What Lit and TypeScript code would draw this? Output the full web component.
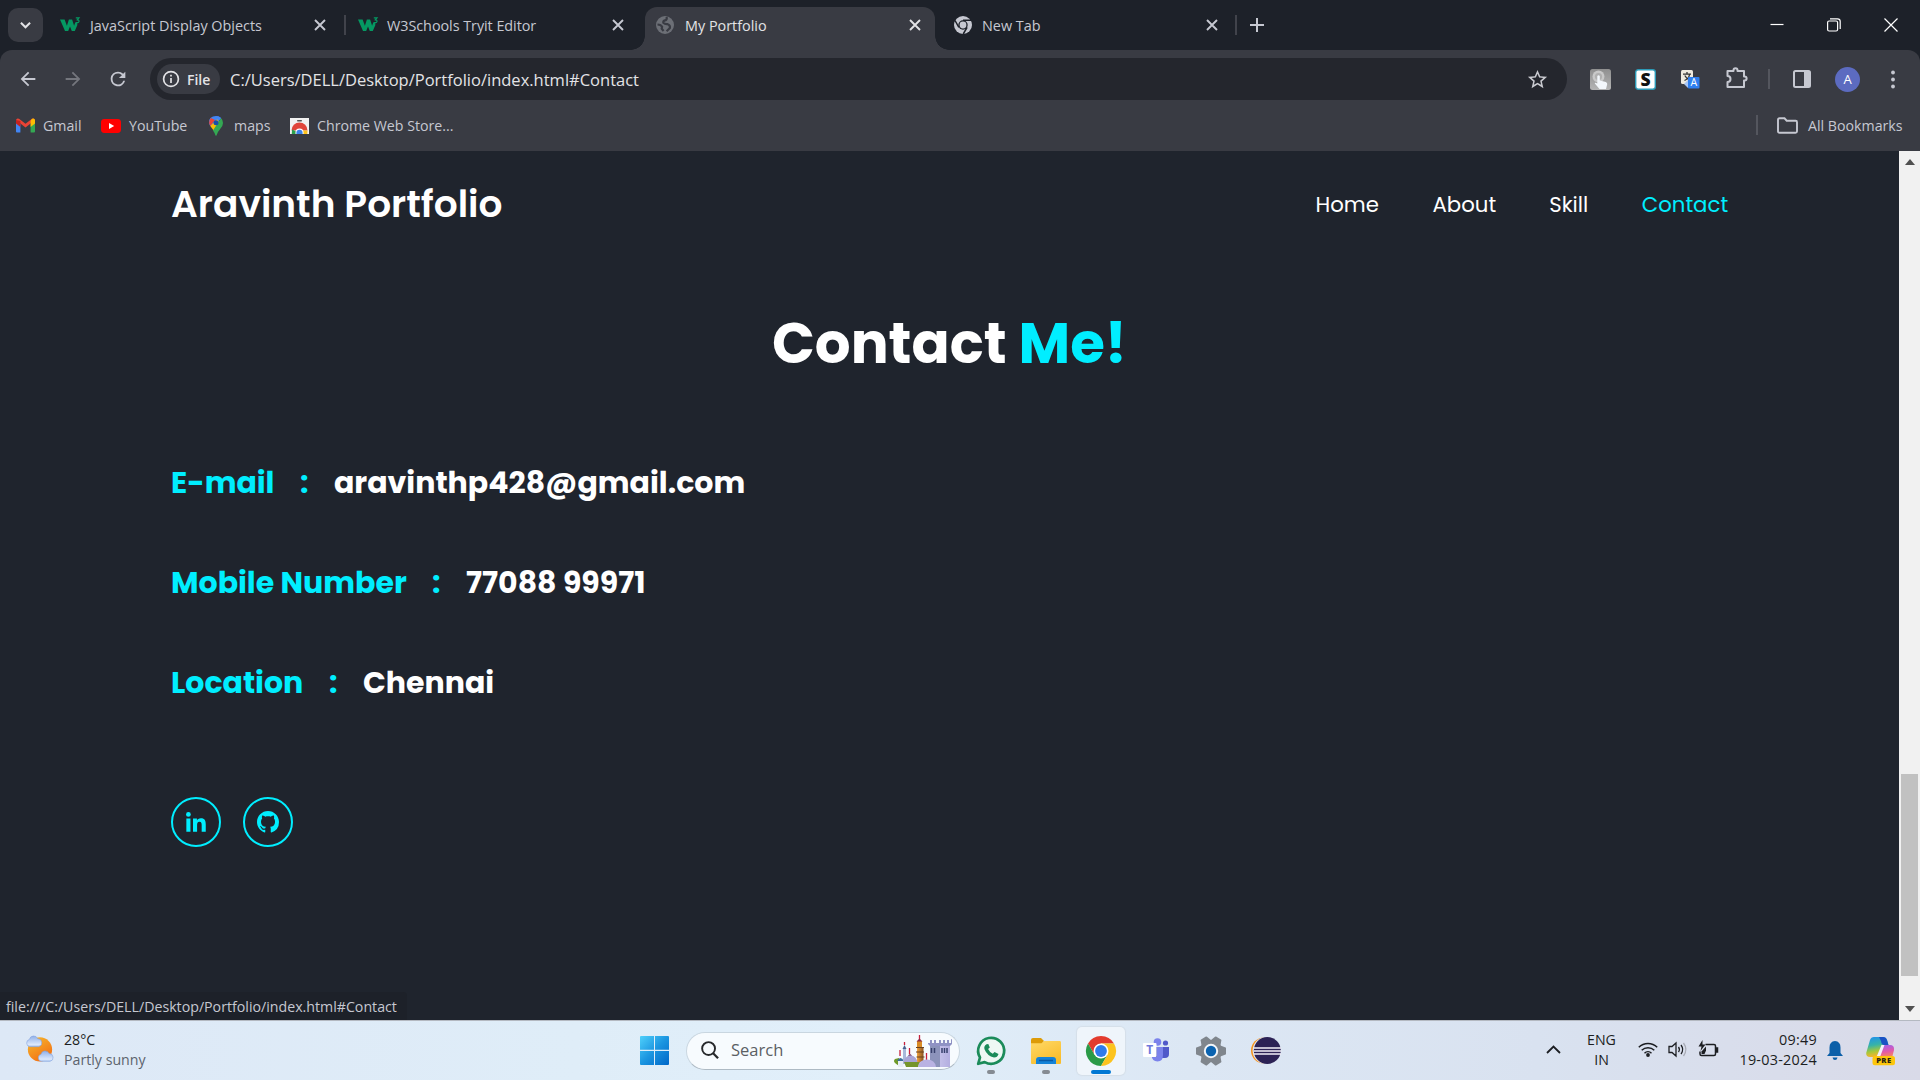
import { LitElement, html, svg, css } from "lit";
import { customElement } from "lit/decorators.js";

const icon = (cls: string, vb: string, body: unknown) =>
  html`<svg class=${cls} viewBox=${vb} aria-hidden="true">${body}</svg>`;

const cross = svg`<path d="M1 1 11 11M11 1 1 11" fill="none" stroke="currentColor" stroke-width="1.9"/>`;
const w3 = svg`<path d="M0 4.500h4.600l2.300 6.200 2-6.200h3.200l2 6.200 1.200-3.400 2 .4v2.600L14.800 16h-3L10 11.400 8.200 16H5z" fill="#059862"/>
  <path d="M15.800 2.800h3.200l-1.700 2q2 .2 1.700 1.800-.6 1.600-3 .9" fill="none" stroke="#059862" stroke-width="1.200"/>`;
const globe = svg`<circle cx="10" cy="10" r="9" fill="#6c6f76"/>
  <path d="M11.500 1.800q.8 2.400-.8 3.400-2.700.5-2.400 2.600 1.500 1.400 4 1.200 3.200 1.200 2.600 4l-3.300 3.300M2.500 9.500q3.600.2 4.600 2.300l-.4 2 1.900 2.200" fill="none" stroke="#393b43" stroke-width="2.200"/>`;
const chromeGrey = svg`<circle cx="10" cy="10" r="9" fill="#c6c8d1"/>
  <circle cx="10" cy="10" r="4.700" fill="#1d2129"/><circle cx="10" cy="10" r="3.400" fill="#c6c8d1"/>
  <path d="M10 5.300h8M5.900 12.300 2 5.500M14.100 12.300 10.200 19" stroke="#1d2129" stroke-width="1.500" fill="none"/>`;
const chromeColor = svg`<path d="M28 7.500A15 15 0 0 0 2 7.500L8.500 18.750 15 7.500z" fill="#e33b2e"/>
  <path d="M2 7.500A15 15 0 0 0 15 30L21.500 18.750H8.500z" fill="#2a9a47"/>
  <path d="M15 30A15 15 0 0 0 28 7.500H15L21.500 18.750z" fill="#fcc31e"/>
  <circle cx="15" cy="15" r="7.500" fill="#fff"/><circle cx="15" cy="15" r="5.900" fill="#2f7bea"/>`;
const gmail = svg`<path d="M0 2v11.500q0 1 1 1h3.400V6z" fill="#4285f4"/><path d="M19 2v11.500q0 1-1 1h-3.400V6z" fill="#34a853"/>
  <path d="M0 2Q.6-.4 3 .8l6.500 5L16 .8Q18.400-.4 19 2l-4.400 3.600-5.100 4-5.100-4z" fill="#ea4335"/>
  <path d="M0 2v3.500l4.400 3.400V3z" fill="#c5221f"/><path d="M14.600 2.800 16 .8Q18.400-.4 19 2v3.500l-4.400 3.400z" fill="#fbbc04"/>`;
const youtube = svg`<rect width="20" height="14" rx="3.400" fill="#f00"/><path d="M8 4v6l5.200-3z" fill="#fff"/>`;
const maps = svg`<path d="M7 0Q10 0 12 2L4.500 10.500 1.200 10Q0 8 0 6.500 0 0 7 0z" fill="#4285f4"/>
  <path d="M2 2Q0 4 .1 7l1.300 3L6 4z" fill="#ea4335"/><path d="M1.300 10 9 2.500l1.200 5-5.600 7z" fill="#fbbc04"/>
  <path d="M12 2q2 2 2 5 0 2.500-2.500 5.500Q8.500 16 7.600 19.200q-.6 1-1.200 0-.5-2-2.400-4.700z" fill="#34a853"/>
  <path d="M7 0q3 0 5 2L9.200 5.400z" fill="#4285f4"/><circle cx="7" cy="6.700" r="2.500" fill="#1a4fa8"/>`;
const store = svg`<path d="M0 0h19v16H0z" fill="#f1f1f1"/><rect x="7" y="2" width="5" height="1.500" rx=".7" fill="#555"/>
  <path d="M1.500 12.500a8 8 0 0 1 16 0H9.500z" fill="#e0443a"/>
  <path d="M2 11.500 1.800 16H7l-.6-2.500z" fill="#2aa04c"/><path d="M12.600 12.500H17.500L17.300 16H12z" fill="#fcc31e"/>
  <path d="M5.500 16v-1.500a4 4 0 0 1 8 0V16z" fill="#fff"/><path d="M6.400 16v-1.200a3.100 3.100 0 0 1 6.200 0V16z" fill="#3b82ee"/>`;
const back = svg`<path d="M20 11H7.830l5.590-5.590L12 4l-8 8 8 8 1.410-1.410L7.830 13H20z" fill="currentColor"/>`;
const forward = svg`<path d="M4 11h12.170l-5.590-5.590L12 4l8 8-8 8-1.410-1.410L16.170 13H4z" fill="currentColor"/>`;
const reload = svg`<path d="M17.650 6.350A7.960 7.960 0 0 0 12 4a8 8 0 1 0 7.730 10h-2.080A6 6 0 1 1 12 6c1.660 0 3.140.69 4.220 1.780L13 11h7V4z" fill="currentColor"/>`;
const info = svg`<circle cx="9" cy="9" r="7.400" fill="none" stroke="#e3e3e6" stroke-width="1.700"/>
  <path d="M9 8v5M9 4.800v1.700" stroke="#e3e3e6" stroke-width="1.700"/>`;
const star = svg`<path d="M12 17.270 18.180 21l-1.640-7.030L22 9.240l-7.190-.61L12 2 9.190 8.630 2 9.240l5.460 4.730L5.820 21zm0-2-3.760 2.270 1-4.280L5.920 10.400l4.380-.38L12 6l1.710 4.020 4.380.38-3.320 2.880 1 4.270z" fill="#c9cad0"/>`;
const touch = svg`<defs><linearGradient id="tg" x2="0" y2="1"><stop stop-color="#8f8f8f"/><stop offset="1" stop-color="#b5b5b5"/></linearGradient></defs>
  <rect width="21" height="21" rx="2.500" fill="url(#tg)"/><circle cx="8.500" cy="7.500" r="6" fill="#c9c9c9"/><circle cx="8.500" cy="7.500" r="3.600" fill="#b0b0b0"/>
  <path d="M7.300 7q1.300-1.400 2.500 0v4.500l6 1.400q1.700.6 1.400 2.400L16 20H9.500L4.800 14.600q-.2-1.500 2.500 0z" fill="#f3f7fb"/>`;
const sBox = svg`<rect x=".7" y=".7" width="19.600" height="19.600" rx="2.500" fill="#fff" stroke="#2c9ab7" stroke-width="1.400"/>
  <text x="10.500" y="16.800" text-anchor="middle" font-size="17.500" font-weight="800" fill="#111">S</text>`;
const translate = svg`<rect width="12" height="14" rx="1.500" fill="#efeadf"/><path d="M2 4.200h8M6 2v2M3.500 10.500Q8 8.500 8.500 4.500M3.800 5.500Q5.500 9 9 10.200" stroke="#333" stroke-width="1.300" fill="none"/>
  <path d="M3 14l4 4V10z" fill="#a9c6f5"/><rect x="7" y="7" width="11.500" height="11.500" rx="1" fill="#2f7ff0"/>
  <text x="12.700" y="16.400" text-anchor="middle" font-size="10.500" fill="#fff">A</text>`;
const puzzle = svg`<path d="M1.500 4h6V3.200a2 2 0 0 1 4 0V4H18v5.500h.6a2 2 0 0 1 0 4H18V20H1.500v-5a3 3 0 0 0 0-6z" fill="none" stroke="#c6c8d1" stroke-width="2" stroke-linejoin="round"/>`;
const panel = svg`<rect x="1" y="1" width="16" height="16" rx="1.500" fill="none" stroke="#c6c8d1" stroke-width="2"/><path d="M11 1h6v16h-6z" fill="#c6c8d1"/>`;
const dots = svg`<g fill="#c6c8d1"><circle cx="3" cy="2.500" r="1.900"/><circle cx="3" cy="9.500" r="1.900"/><circle cx="3" cy="16.500" r="1.900"/></g>`;
const folderLine = svg`<path d="M1 2.500Q1 1 2.500 1h5l2.200 2.500h9Q20 3.500 20 5v9q0 1.500-1.500 1.500h-16Q1 15.500 1 14z" fill="none" stroke="#c6c8d1" stroke-width="1.900"/>`;

const linkedin = svg`<circle cx="4.983" cy="5.009" r="2.188"/><path d="M9.237 8.855v12.139h3.769v-6.003c0-1.584.298-3.118 2.262-3.118 1.937 0 1.961 1.811 1.961 3.218v5.904H21v-6.657c0-3.270-.704-5.783-4.526-5.783-1.835 0-3.065 1.007-3.568 1.960h-.051v-1.660zm-6.142 0H6.870v12.139H3.095z"/>`;
const github = svg`<path d="M8 0C3.580 0 0 3.580 0 8c0 3.540 2.290 6.530 5.470 7.590.4.07.55-.17.55-.38 0-.19-.01-.82-.01-1.490-2.010.37-2.530-.49-2.690-.94-.09-.23-.48-.94-.82-1.130-.28-.15-.68-.52-.01-.53.63-.01 1.080.58 1.230.82.72 1.210 1.870.87 2.330.66.07-.52.28-.87.51-1.070-1.780-.2-3.640-.89-3.640-3.950 0-.87.31-1.590.82-2.150-.08-.2-.36-1.020.08-2.120 0 0 .67-.21 2.200.82.64-.18 1.320-.27 2-.27s1.360.09 2 .27c1.530-1.040 2.200-.82 2.200-.82.44 1.100.16 1.920.08 2.120.51.56.82 1.270.82 2.150 0 3.070-1.870 3.750-3.650 3.950.29.25.54.73.54 1.480 0 1.070-.01 1.930-.01 2.200 0 .21.15.46.55.38A8.010 8.010 0 0 0 16 8c0-4.420-3.580-8-8-8z"/>`;

const cloud = (x: number, y: number, s: number) =>
  svg`<path transform="translate(${x} ${y}) scale(${s})" d="M4 12.500a4 4 0 0 1-.3-7.800A4.600 4.600 0 0 1 12.500 4a4.300 4.300 0 0 1 1 8.500z" fill="url(#cl)" stroke="#7f9fdd" stroke-width=".6"/>`;
const weather = svg`<defs><linearGradient id="sun" x1=".2" x2=".8" y2="1"><stop stop-color="#f6b52c"/><stop offset="1" stop-color="#f26a12"/></linearGradient>
  <linearGradient id="cl" x2="0" y2="1"><stop stop-color="#8fb0ea"/><stop offset=".8" stop-color="#dce8fb"/><stop offset="1" stop-color="#a9c3f0"/></linearGradient></defs>
  <circle cx="15" cy="15.500" r="13" fill="url(#sun)"/>${cloud(0, 0, 1)}${cloud(12.5, 16, 0.98)}`;
const windows = svg`<defs><linearGradient id="wn" x2="1" y2="1"><stop stop-color="#4fd0fb"/><stop offset=".5" stop-color="#1b95e0"/><stop offset="1" stop-color="#0067c8"/></linearGradient></defs>
  <path d="M1 0h13v13.800H0V1q0-1 1-1zM15 0h13q1 0 1 1v12.800H15zM0 15h14v14H1q-1 0-1-1zM15 15h14v13q0 1-1 1H15z" fill="url(#wn)"/>`;
const lens = svg`<circle cx="8" cy="8" r="6.800" fill="none" stroke="#26282b" stroke-width="2"/><path d="M12.800 13 18 18.200" stroke="#26282b" stroke-width="2.400"/>`;
const castle = svg`<defs><linearGradient id="lt" x2="1"><stop stop-color="#c3bfe8"/><stop offset="1" stop-color="#b3aee0"/></linearGradient>
  <linearGradient id="or" x2="1"><stop stop-color="#f0a23c"/><stop offset="1" stop-color="#8a5320"/></linearGradient></defs>
  <path d="M34 5v3h2V5h2v3h2V5h2v3h3V5h2v3h2V5h2v3h2V5h2v3h2V4l1 .5V9l-2 2v21H36V11l-2-2z" fill="#8f92c4"/>
  <path d="M36 11h10v21H36z" fill="#8c93bb"/><path d="M46 11h10v21H46z" fill="url(#lt)"/>
  <path d="M37.500 13v5M40.500 13v5M48 13v5M50.500 13v5M53 13v5" stroke="#37406c" stroke-width="1.500"/>
  <path d="M1 28q-2-2 0-4l4-1v8z" fill="#6f9a2a"/><path d="M4 26h5.500v6H4z" fill="#e8eef6"/><path d="M3 26q3.500-6 7 0z" fill="#3c6f9c"/>
  <path d="M9 14h3v15H9z" fill="#a8b8da"/><path d="M8.500 14l2-4 2 4z" fill="#49618f"/><path d="M10.500 7v3M6 15v6M15.500 13v6M25.500 0v6M32.500 18v8" stroke="#c8203c" stroke-width="1.300"/>
  <path d="M23 12h6.500v15H23z" fill="url(#or)"/><path d="M23 6h5v6h-5z" fill="#d98b25"/><path d="M22.500 6.500l3-3 3 3z" fill="#8c2e45"/>
  <path d="M22 12.500h8M22 17h8M22.500 22h8" stroke="#69401e" stroke-width="1"/><path d="M14 21q2-4 4 0z" fill="#7a3f66"/>
  <path d="M9.500 28a7 7.500 0 0 1 14 0z" fill="#a9a4d6"/><path d="M10 27h16l-2 5H12z" fill="#75952b"/><path d="M24 32q1-7.500 9-7.500T42 32z" fill="#b9b2e2"/>`;
const whatsapp = svg`<path d="M2.200 27.800 4 21.500A13 13 0 1 1 8.700 26.100z" fill="#eef8f4" stroke="#1b8b5a" stroke-width="2.700" stroke-linejoin="round"/>
  <path d="M10.500 8.300q-3 1.900-2 5Q11.200 20 18 21.600q3.500 0 4.500-3.600l-4-2.100-1.700 1.800q-3.400-1.500-4.700-4.600l1.700-1.700-1.500-3.400z" fill="#1b8b5a"/>`;
const explorer = svg`<defs><linearGradient id="fo" x2=".6" y2="1"><stop stop-color="#ffd968"/><stop offset="1" stop-color="#f9bd2c"/></linearGradient></defs>
  <path d="M0 2Q0 0 2 0h8l3 3-2 3H0z" fill="#dd9b08"/><path d="M0 5.200h10.500L13 3h16q1 0 1 1.500V25q0 1-1 1H1q-1 0-1-1z" fill="url(#fo)"/>
  <path d="M5 26v-4q0-3 3-3h14q3 0 3 3v4z" fill="#1483d8"/><path d="M8 22.500h14" stroke="#0a5aa5" stroke-width="1.500"/>`;
const teams = svg`<circle cx="14.500" cy="4" r="3.800" fill="#7b83eb"/><circle cx="22.500" cy="5" r="2.600" fill="#5059c9"/>
  <path d="M17 9h9v7q0 4-4 4h-3z" fill="#5059c9"/><path d="M8.500 9H20v8q0 6.500-5.500 6.500T8.500 17z" fill="#7b83eb"/>
  <path d="M8.500 9H14v10H9z" fill="#40469e" opacity=".6"/><rect y="5" width="13.500" height="14" rx="1" fill="#fff"/>
  <text x="6.800" y="16" text-anchor="middle" font-size="12" font-weight="700" fill="#7079dc">T</text>`;
const gear = svg`<g fill="#80868d"><circle cx="15" cy="14" r="11"/>${[0, 60, 120].map((a) =>
  svg`<path transform="rotate(${a} 15 14)" d="M0 11.200q0-1 1-1L7 8h16l6 2.200q1 0 1 1v5.600q0 1-1 1L23 20H7l-6-2.200q-1 0-1-1z"/>`)}</g>
  <circle cx="15" cy="14" r="7.200" fill="#f2f5f9"/><circle cx="15" cy="14" r="5.200" fill="#0b63b0"/>`;
const eclipse = svg`<circle cx="13" cy="13.500" r="13" fill="#f7941e"/><circle cx="15.200" cy="13.500" r="13.600" fill="#e4ebf5"/><circle cx="16.300" cy="13.500" r="13.500" fill="#2c2255"/>
  <path d="M3 11h27M2.800 14h27.400M3 17h27" stroke="#f2f0f8" stroke-width="1.600"/>`;
const chevron = svg`<path d="M1 8 7.500 1.500 14 8" fill="none" stroke="#1c1e22" stroke-width="1.800"/>`;
const wifi = svg`<g fill="none" stroke="#1c1e22" stroke-width="1.500"><path d="M.8 6.300a13 13 0 0 1 18.400 0M3.700 9.300a9 9 0 0 1 12.600 0M6.500 12.200a5 5 0 0 1 7 0"/></g><circle cx="10" cy="14" r="1.900" fill="#1c1e22"/>`;
const speaker = svg`<g fill="none" stroke="#1c1e22" stroke-width="1.300"><path d="M1 5.500h3L8 2v13l-4-3.500H1zM10.500 6q1.800 2.500 0 5M13 4q3.300 4.500 0 9"/><path d="M15.500 2q4.700 6.500 0 13" stroke="#a9acb6"/></g>`;
const battery = svg`<path d="M7.500 4.500H16q1.500 0 1.500 1.500v8q0 1.500-1.500 1.500H3.500Q2 15.500 2 14v-2.500M18.500 8v4h1V8z" fill="none" stroke="#1c1e22" stroke-width="1.500"/>
  <path d="M4.500 0 .5 6.500h3L2.500 11l5-6.500h-3z" fill="#1c1e22"/><path d="M3.500 14V11.500L8 6.500v4L6.500 14z" fill="#1c1e22"/>`;
const bell = svg`<path d="M8 0Q13.500.5 13.500 6.500V12l2.500 3H0l2.500-3V6.500Q2.500.5 8 0z" fill="#0b5fa8"/><path d="M5.500 16.500h5q-.5 2.500-2.500 2.500t-2.500-2.500z" fill="#0b5fa8"/>`;
const copilot = svg`<defs><linearGradient id="c1" x2=".2" y2="1"><stop stop-color="#1f8ff0"/><stop offset=".45" stop-color="#36b3a8"/><stop offset=".75" stop-color="#a5c83c"/><stop offset="1" stop-color="#f4b52c"/></linearGradient>
  <linearGradient id="c2" x2=".2" y2="1"><stop stop-color="#9a62f2"/><stop offset=".6" stop-color="#e45aa8"/><stop offset="1" stop-color="#f58a5a"/></linearGradient></defs>
  <path d="M8 0h9q3 0 4 3l1.500 5H16l-4 10q-1 2-3 2H4q-4 0-3.800-4L4 3q1-3 4-3z" fill="url(#c1)"/><path d="M13 0h4q3 0 4 3l1.500 5H18q-2.500 0-3-4z" fill="#1a52c4"/>
  <path d="M18 8h6q4.500 0 4 5l-2 8H12l3.500-10Q16.300 8 18 8z" fill="url(#c2)"/><path d="M15.500 8h3L14 20h-3.500z" fill="#f3f1fb"/>
  <rect x="6.500" y="19" width="22.500" height="9.200" rx="2.500" fill="#fdc60c"/>
  <text x="17.800" y="26.400" text-anchor="middle" font-size="7.600" font-weight="800" letter-spacing=".4" fill="#2a2410">PRE</text>`;

const tabs = [
  { cls: "one", mark: w3, title: "JavaScript Display Objects" },
  { cls: "two", mark: w3, title: "W3Schools Tryit Editor" },
  { cls: "three active", mark: globe, title: "My Portfolio" },
  { cls: "four", mark: chromeGrey, title: "New Tab" },
];
const contacts = [
  { cls: "mail", label: "E-mail", value: "aravinthp428@gmail.com" },
  { cls: "phone", label: "Mobile Number", value: "77088 99971" },
  { cls: "place", label: "Location", value: "Chennai" },
];

@customElement("app-root")
export class AppRoot extends LitElement {
  static styles = css`
    :host { display: flex; flex-direction: column; width: 1920px; height: 1080px; overflow: hidden; background: #1f242d; font-family: "Segoe UI", "Open Sans", "Noto Sans", sans-serif; }
    * { box-sizing: border-box; }
    svg { display: block; flex: none; font-family: "Open Sans", sans-serif; overflow: visible; }
    .t { white-space: nowrap; }

    .strip { display: flex; align-items: center; height: 50px; flex: none; background: #1d2129; padding-left: 8px; color: #c6c8d1; font-size: 14.4px; }
    .finder { display: flex; align-items: center; justify-content: center; width: 35px; height: 34px; border-radius: 10px; background: #393b43; margin-right: 4px; }
    .finder svg { width: 11px; height: 8px; }
    .tab { display: flex; align-items: center; height: 50px; flex: none; }
    .tab .title { flex: 1; margin-left: 10px; }
    .fav { width: 20px; height: 20px; }
    .x { width: 12px; height: 12px; }
    .one { width: 297px; padding: 0 18px 0 13px; }
    .two { width: 299px; padding: 0 21px 0 12px; }
    .two .title { margin-left: 9px; letter-spacing: -0.05px; }
    .three { width: 290px; padding: 0 14px 0 10px; }
    .four { width: 300px; padding: 0 17px 0 18px; }
    .four .title { margin-left: 9px; }
    .active { position: relative; height: 43px; align-self: flex-end; padding-bottom: 7px; border-radius: 12px 12px 0 0; background: #393b43; color: #e3e3e6; }
    .active::before, .active::after { content: ""; position: absolute; bottom: 0; width: 14px; height: 14px; }
    .active::before { left: -14px; background: radial-gradient(circle at 0 0, transparent 13.5px, #393b43 14px); }
    .active::after { right: -14px; background: radial-gradient(circle at 100% 0, transparent 13.5px, #393b43 14px); }
    .sep { width: 2px; height: 20px; background: #41434b; flex: none; }
    .plus { width: 14px; height: 14px; margin-left: 13px; }
    .win { display: flex; align-items: center; margin-left: auto; padding-right: 22px; gap: 43px; color: #fff; }
    .win svg { width: 14px; height: 14px; }

    .chrome { flex: none; background: #1d2129; height: 101px; }
    .chrome-in { height: 101px; border-radius: 12px 12px 0 0; background: #393b43; }
    .bar { display: flex; align-items: center; height: 58px; color: #c6c8d1; padding-left: 16.5px; }
    .nav { width: 22px; height: 22px; margin: -1px 23px 0 0; }
    .dim { color: #74767d; }
    .omni { display: flex; align-items: center; height: 42px; width: 1417px; margin-left: -1.5px; border-radius: 21px; background: #24262d; padding: 0 18px 0 7px; }
    .chip { display: flex; align-items: center; width: 63px; height: 30px; border-radius: 15px; background: #393b43; color: #e3e3e6; padding-left: 5px; gap: 7px; font-size: 14px; font-weight: 600; }
    .chip svg { width: 18px; height: 18px; }
    .url { flex: 1; margin-left: 10px; color: #e3e3e6; font-size: 16.5px; }
    .star { width: 23px; height: 23px; }
    .e21 { width: 21px; height: 21px; }
    .tools { display: flex; align-items: center; margin-left: 23px; }
    .e1 { margin-right: 24px; } .e2 { margin-right: 25px; }
    .tr { width: 19px; height: 19px; margin-right: 26px; }
    .pz { width: 22px; height: 22px; margin: -2px 20px 0 0; }
    .tools .sep, .all .sep { background: #54565e; }
    .tools .sep { margin-right: 23px; }
    .pn { width: 18px; height: 18px; margin-right: 24px; }
    .avatar { display: flex; align-items: center; justify-content: center; width: 25px; height: 25px; border-radius: 50%; background: #5c6bc0; color: #fff; font-size: 13px; margin-right: 30px; }
    .dt { width: 6px; height: 19px; }
    .marks { display: flex; align-items: center; height: 34px; color: #c6c8d1; font-size: 14.2px; padding: 0 17px 0 16px; }
    .mk { display: flex; align-items: center; }
    .mk .t { margin-left: 8px; }
    .mk svg { margin-top: 1px; }
    .mk1 { width: 85px; } .mk1 svg { width: 19px; height: 15px; }
    .mk2 { width: 108px; } .mk2 svg { width: 20px; height: 14px; }
    .mk3 { width: 81px; } .mk3 svg { width: 14px; height: 20px; } .mk3 .t { margin-left: 11px; }
    .mk4 svg { width: 19px; height: 16px; }
    .all { margin-left: auto; display: flex; align-items: center; width: 147px; }
    .all svg { width: 21px; height: 17px; margin: 0 10px 0 19px; }

    .view { display: flex; flex: none; height: 869px; }
    .page { display: flex; flex-direction: column; width: 1899px; padding-left: 171px; color: #fff; font-family: Poppins, Inter, "Open Sans", sans-serif; }
    .head { display: flex; align-items: center; height: 105px; }
    .brand { width: 1144.5px; font-size: 37.5px; font-weight: 600; line-height: 50px; }
    .links { display: flex; font-size: 21.25px; line-height: 30px; margin-top: 2px; }
    .l1 { width: 117px; } .l2 { width: 116.7px; } .l3 { width: 92.6px; }
    .cyan { color: #00eeff; }
    .hero { display: flex; gap: 15px; margin: 53px 0 54px 601px; line-height: 70px; font-size: 56.25px; font-weight: 700; }
    .hero .a { width: 231.5px; }
    .row { display: flex; height: 100px; align-items: center; font-size: 30px; font-weight: 700; }
    .label, .colon { color: #00eeff; }
    .colon { width: 34px; }
    .mail .label { width: 129px; } .phone .label { width: 261px; } .place .label { width: 158px; }
    .social { display: flex; gap: 22px; margin-top: 64px; }
    .ring { display: flex; align-items: center; justify-content: center; width: 50px; height: 50px; border: 2px solid #00eeff; border-radius: 50%; fill: #00eeff; }
    .ring svg { width: 26px; height: 26px; }
    .ring .gh { width: 22px; height: 22px; }
    .bubble { display: flex; align-items: center; width: 407px; height: 28px; margin: auto 0 0 -171px; padding-left: 6px; background: #1d2129; border-radius: 0 4px 0 0; color: #c6c8d1; font: 14.2px "Segoe UI", "Open Sans", sans-serif; }
    .scroll { display: flex; flex-direction: column; align-items: center; width: 21px; padding: 8px 0; background: #f1f1f1; }
    .scroll svg { width: 10px; height: 6px; }
    .thumb { width: 17px; height: 202px; margin: 609px 0 auto; background: #c1c1c1; }

    .task { display: flex; flex: none; height: 60px; align-items: center; border-top: 1px solid #b4b9c1; background: linear-gradient(90deg, #dde8f6, #dfedf8 30%, #e1effa 45%, #dce7f4 62%, #d9e2f0 80%, #d9dae8); color: #1c1e22; font-size: 14.2px; line-height: 20px; }
    .sun { width: 30px; height: 28px; margin: -4px 9px 0 25px; }
    .wx { width: 576px; margin-top: -2px; }
    .sub { color: #5c636d; }
    .logo { width: 29px; height: 29px; margin-right: 17px; }
    .search { display: flex; align-items: center; width: 274px; height: 38px; border-radius: 19px; background: #f7fbfe; border: 1px solid #c9d6e0; border-bottom-color: #aebac4; padding-left: 14px; font-size: 16.5px; color: #5b5f64; }
    .lens { width: 18px; height: 18px; margin: -1px 12px 0 0; }
    .search .t { margin-top: -1px; }
    .castle { width: 58px; height: 32px; margin: 0 7px 0 auto; }
    .app { display: flex; flex-direction: column; align-items: center; width: 48px; height: 48px; border-radius: 5px; padding-top: 9px; margin-right: 7px; }
    .app svg { width: 30px; height: 30px; }
    .app .ex { height: 26px; margin: 2px 0; }
    .app .tm { width: 26px; height: 24px; margin-top: 2px; }
    .app .ec { width: 30px; height: 27px; margin-top: 1px; }
    .app .gr { height: 28px; margin-top: 1px; }
    .dot { width: 8px; height: 4px; border-radius: 2px; background: #858b92; margin-top: 4px; }
    .on { background: #eff5fb; box-shadow: 0 0 1px 1px #d5dfe9; }
    .on .dot { width: 20px; background: #0078d4; }
    .apps { display: flex; padding-left: 7px; }
    .tray { display: flex; align-items: center; margin-left: auto; padding-right: 25px; }
    .cv { width: 15px; height: 9px; margin: -2px 26px 0 0; }
    .lang { width: 29px; text-align: center; margin: -1px 22px 0 0; }
    .wf { width: 20px; height: 16px; margin: -3px 10px 0 0; }
    .sp { width: 20px; height: 17px; margin: -3px 10px 0 0; }
    .bt { width: 20px; height: 17px; margin: -4px 19px 0 0; }
    .clock { width: 80px; text-align: right; margin: -2px 10px 0 0; font-size: 14.4px; letter-spacing: 0.25px; }
    .bl { width: 16px; height: 19px; margin-right: 23px; }
    .cp { width: 29px; height: 28px; }
  `;

  render() {
    return html`
      <div class="strip">
        <div class="finder">${icon("", "0 0 12 8", svg`<path d="M1 1.500 6 6.500 11 1.500" fill="none" stroke="#e3e3e6" stroke-width="2.200"/>`)}</div>
        ${tabs.map((t, i) => html`
          <div class="tab ${t.cls}">${icon("fav", "0 0 20 20", t.mark)}<span class="title"><span class="t">${t.title}</span></span>${icon("x", "0 0 12 12", cross)}</div>
          ${i === 0 || i === 3 ? html`<div class="sep"></div>` : ""}`)}
        ${icon("plus", "0 0 14 14", svg`<path d="M7 0v14M0 7h14" stroke="currentColor" stroke-width="2"/>`)}
        <div class="win">
          ${icon("", "0 0 14 14", svg`<path d="M.500 6.500h13" stroke="currentColor" stroke-width="1.200"/>`)}
          ${icon("", "0 0 14 14", svg`<path d="M.6 4.500q0-1.500 1.500-1.500h7q1.500 0 1.500 1.500v7q0 1.500-1.500 1.500h-7Q.6 13 .6 11.500zM3 .8h7.500q2.700 0 2.700 2.700V11" fill="none" stroke="currentColor" stroke-width="1.200"/>`)}
          ${icon("", "0 0 14 14", svg`<path d="M.5.5l13 13M13.500.5l-13 13" stroke="currentColor" stroke-width="1.200"/>`)}
        </div>
      </div>
      <div class="chrome"><div class="chrome-in">
        <div class="bar">
          ${icon("nav", "0 0 24 24", back)}${icon("nav dim", "0 0 24 24", forward)}${icon("nav", "0 0 24 24", reload)}
          <div class="omni">
            <div class="chip">${icon("", "0 0 18 18", info)}<span class="t">File</span></div>
            <span class="url"><span class="t">C:/Users/DELL/Desktop/Portfolio/index.html#Contact</span></span>
            ${icon("star", "0 0 24 24", star)}
          </div>
          <div class="tools">
            ${icon("e21 e1", "0 0 21 21", touch)}${icon("e21 e2", "0 0 21 21", sBox)}${icon("tr", "0 0 19 19", translate)}${icon("pz", "0 0 22 22", puzzle)}
            <div class="sep"></div>${icon("pn", "0 0 18 18", panel)}<div class="avatar">A</div>${icon("dt", "0 0 6 19", dots)}
          </div>
        </div>
        <div class="marks">
          <div class="mk mk1">${icon("", "0 0 19 15", gmail)}<span class="t">Gmail</span></div>
          <div class="mk mk2">${icon("", "0 0 20 14", youtube)}<span class="t">YouTube</span></div>
          <div class="mk mk3">${icon("", "0 0 14 20", maps)}<span class="t">maps</span></div>
          <div class="mk mk4">${icon("", "0 0 19 16", store)}<span class="t">Chrome Web Store...</span></div>
          <div class="all"><div class="sep"></div>${icon("", "0 0 21 16.500", folderLine)}<span class="t">All Bookmarks</span></div>
        </div>
      </div></div>
      <div class="view">
        <div class="page">
          <div class="head">
            <div class="brand"><span class="t">Aravinth Portfolio</span></div>
            <div class="links"><div class="l1"><span class="t">Home</span></div><div class="l2"><span class="t">About</span></div><div class="l3"><span class="t">Skill</span></div><div class="cyan"><span class="t">Contact</span></div></div>
          </div>
          <div class="hero"><div class="a"><span class="t">Contact</span></div><div class="cyan"><span class="t">Me!</span></div></div>
          ${contacts.map((c) => html`<div class="row ${c.cls}"><div class="label"><span class="t">${c.label}</span></div><div class="colon"><span class="t">:</span></div><div class="value"><span class="t">${c.value}</span></div></div>`)}
          <div class="social"><div class="ring">${icon("", "0 0 24 24", linkedin)}</div><div class="ring">${icon("gh", "0 0 16 16", github)}</div></div>
          <div class="bubble"><span class="t">file:///C:/Users/DELL/Desktop/Portfolio/index.html#Contact</span></div>
        </div>
        <div class="scroll">
          ${icon("", "0 0 10 6", svg`<path d="M5 0 10 6H0z" fill="#505050"/>`)}
          <div class="thumb"></div>
          ${icon("", "0 0 10 6", svg`<path d="M0 0h10L5 6z" fill="#505050"/>`)}
        </div>
      </div>
      <div class="task">
        ${icon("sun", "0 0 30 30", weather)}
        <div class="wx"><div><span class="t">28°C</span></div><div class="sub"><span class="t">Partly sunny</span></div></div>
        ${icon("logo", "0 0 29 29", windows)}
        <div class="search">${icon("lens", "0 0 19 19", lens)}<span class="t">Search</span>${icon("castle", "0 0 58 32", castle)}</div>
        <div class="apps">
          <div class="app">${icon("", "0 0 30 30", whatsapp)}<div class="dot"></div></div>
          <div class="app">${icon("ex", "0 0 30 26", explorer)}<div class="dot"></div></div>
          <div class="app on">${icon("", "0 0 30 30", chromeColor)}<div class="dot"></div></div>
          <div class="app">${icon("tm", "0 0 26 24", teams)}</div>
          <div class="app">${icon("gr", "0 0 30 28", gear)}</div>
          <div class="app">${icon("ec", "0 0 30 27", eclipse)}</div>
        </div>
        <div class="tray">
          ${icon("cv", "0 0 15 9", chevron)}
          <div class="lang"><span class="t">ENG</span><br><span class="t">IN</span></div>
          ${icon("wf", "0 0 20 16", wifi)}${icon("sp", "0 0 20 17", speaker)}${icon("bt", "0 0 20 17", battery)}
          <div class="clock"><span class="t">09:49</span><br><span class="t">19-03-2024</span></div>
          ${icon("bl", "0 0 16 19", bell)}${icon("cp", "0 0 29 28", copilot)}
        </div>
      </div>
    `;
  }
}
